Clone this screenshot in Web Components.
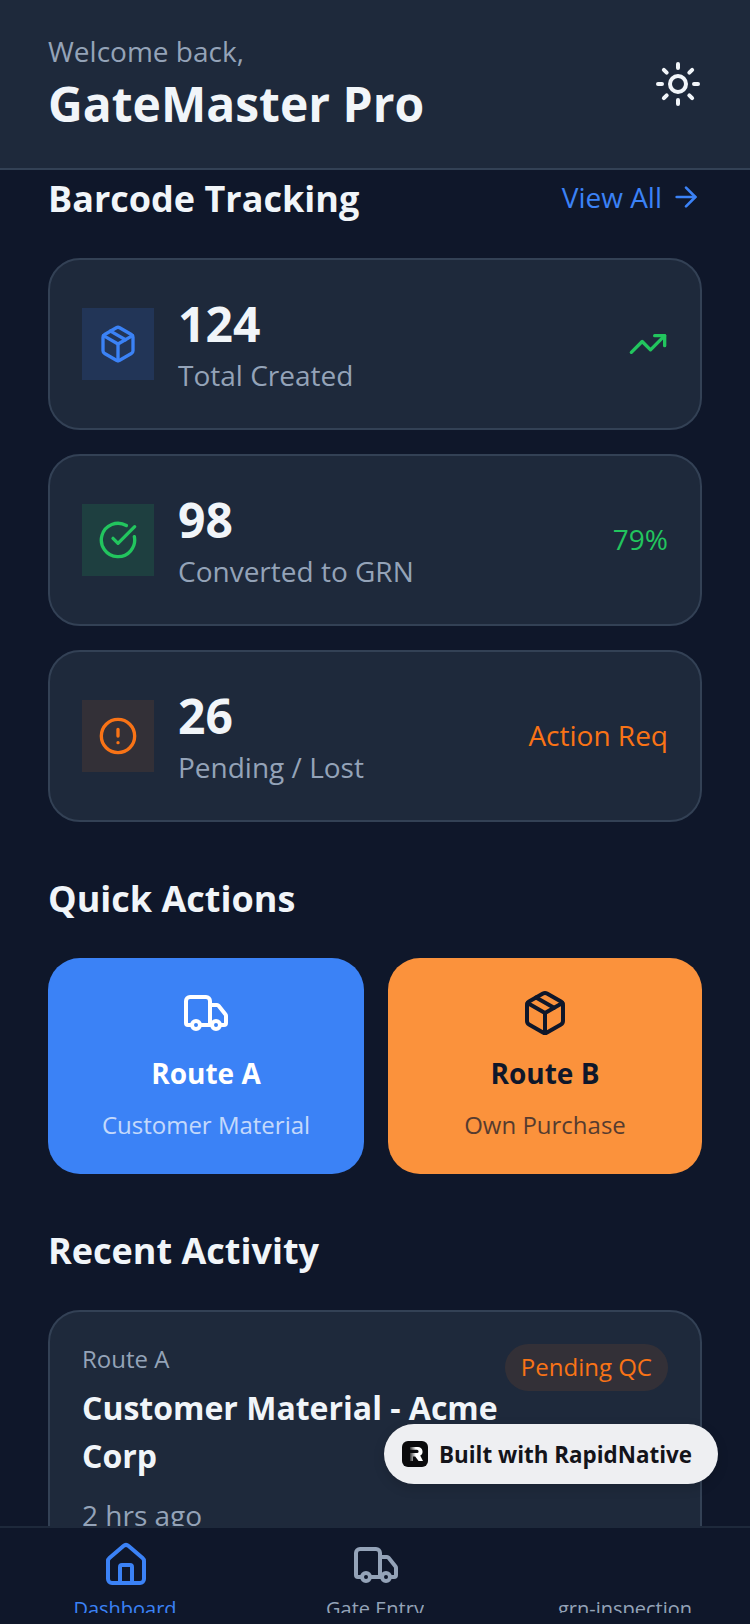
<!DOCTYPE html>
<html lang="en">
<head>
<meta charset="utf-8">
<title>GateMaster Pro</title>
<style>
  html, body { margin: 0; background: #0f172a; }
  body { font-family: "Open Sans", sans-serif; }
</style>
</head>
<body>
<gate-app>
  <gate-header greeting="Welcome back," name="GateMaster Pro"></gate-header>

  <section-heading title="Barcode Tracking" link="View All" first></section-heading>
  <stat-card icon="package" tone="blue" value="124" label="Total Created"><app-icon name="trending-up" size="40" style="color:#22c55e"></app-icon></stat-card>
  <stat-card icon="circle-check" tone="green" value="98" label="Converted to GRN"><span style="color:#22c55e;position:relative;top:-1px">79%</span></stat-card>
  <stat-card icon="circle-alert" tone="orange" value="26" label="Pending / Lost"><span style="color:#f97316;position:relative;top:-1px">Action Req</span></stat-card>

  <section-heading title="Quick Actions"></section-heading>
  <div style="display:flex;gap:24px">
    <action-card icon="truck" title="Route A" sub="Customer Material" variant="a"></action-card>
    <action-card icon="package" title="Route B" sub="Own Purchase" variant="b"></action-card>
  </div>

  <section-heading title="Recent Activity"></section-heading>
  <activity-card route="Route A" title="Customer Material - Acme Corp" time="2 hrs ago" status="Pending QC"></activity-card>

  <tab-bar slot="nav">
    <tab-item icon="house" label="Dashboard" active></tab-item>
    <tab-item icon="truck" label="Gate Entry"></tab-item>
    <tab-item label="grn-inspection"></tab-item>
  </tab-bar>
  <built-badge slot="overlay"></built-badge>
</gate-app>

<script>
  // lucide-style icon bodies, all on a 24 box
  const ICONS = {
    sun: `<circle cx="12" cy="12" r="4"/><path d="M12 2v2M12 20v2M4.93 4.93l1.41 1.41M17.66 17.66l1.41 1.41M2 12h2M20 12h2M6.34 17.66l-1.41 1.41M19.07 4.93l-1.41 1.41"/>`,
    package: `<path d="M11 21.73a2 2 0 0 0 2 0l7-4A2 2 0 0 0 21 16V8a2 2 0 0 0-1-1.73l-7-4a2 2 0 0 0-2 0l-7 4A2 2 0 0 0 3 8v8a2 2 0 0 0 1 1.73z"/><path d="M12 22V12"/><path d="M3.29 7 12 12l8.71-5"/><path d="m7.5 4.27 9 5.15"/>`,
    'circle-check': `<path d="M21.801 10A10 10 0 1 1 17 3.335"/><path d="m9 11 3 3L22 4"/>`,
    'circle-alert': `<circle cx="12" cy="12" r="10"/><path d="M12 8v4M12 16h.01"/>`,
    'trending-up': `<path d="M22 7l-8.5 8.5-5-5L2 17"/><path d="M16 7h6v6"/>`,
    'arrow-right': `<path d="M5 12h14"/><path d="m12 5 7 7-7 7"/>`,
    truck: `<path d="M14 18V6a2 2 0 0 0-2-2H4a2 2 0 0 0-2 2v11a1 1 0 0 0 1 1h2"/><path d="M15 18H9"/><path d="M19 18h2a1 1 0 0 0 1-1v-3.65a1 1 0 0 0-.22-.624l-3.48-4.35A1 1 0 0 0 17.52 8H14"/><circle cx="17" cy="18" r="2"/><circle cx="7" cy="18" r="2"/>`,
    house: `<path d="M15 21v-8a1 1 0 0 0-1-1h-4a1 1 0 0 0-1 1v8"/><path d="M3 10a2 2 0 0 1 .709-1.528l7-5.999a2 2 0 0 1 2.582 0l7 5.999A2 2 0 0 1 21 10v9a2 2 0 0 1-2 2H5a2 2 0 0 1-2-2z"/>`,
  };

  class AppIcon extends HTMLElement {
    connectedCallback() {
      const size = this.getAttribute('size') || 24;
      const root = this.shadowRoot || this.attachShadow({ mode: 'open' });
      root.innerHTML = `
        <style>:host { display: block; width: ${size}px; height: ${size}px; flex: none; } svg { display: block; }</style>
        <svg xmlns="http://www.w3.org/2000/svg" width="${size}" height="${size}" viewBox="0 0 24 24" fill="none"
          stroke="currentColor" stroke-width="2" stroke-linecap="round" stroke-linejoin="round">${ICONS[this.getAttribute('name')] || ''}</svg>`;
    }
  }

  class GateApp extends HTMLElement {
    constructor() {
      super();
      this.attachShadow({ mode: 'open' }).innerHTML = `
        <style>
          :host { display: flex; flex-direction: column; position: relative; height: 1624px; overflow: hidden; background: #0f172a; }
          main { flex: 1; min-height: 0; overflow: hidden; padding: 0 48px; display: flex; flex-direction: column; }
        </style>
        <slot name="top"></slot>
        <main><slot></slot></main>
        <slot name="nav"></slot>
        <slot name="overlay"></slot>`;
    }
    connectedCallback() {
      this.querySelector('gate-header')?.setAttribute('slot', 'top');
    }
  }

  class GateHeader extends HTMLElement {
    connectedCallback() {
      this.attachShadow({ mode: 'open' }).innerHTML = `
        <style>
          :host { display: flex; align-items: center; justify-content: space-between; flex: none; box-sizing: border-box; height: 170px;
            padding: 32px 48px 32px; background: #1e293b; border-bottom: 2px solid #334155; }
          .hello { margin-top: -1px; font-size: 28px; color: #94a3b8; }
          .name { margin-top: 1px; font-size: 48px; font-weight: 700; color: #f1f5f9; }
          app-icon { color: #f1f5f9; }
        </style>
        <div>
          <div class="hello">${this.getAttribute('greeting')}</div>
          <div class="name">${this.getAttribute('name')}</div>
        </div>
        <app-icon name="sun" size="48"></app-icon>`;
    }
  }

  class SectionHeading extends HTMLElement {
    connectedCallback() {
      const link = this.getAttribute('link');
      const first = this.hasAttribute('first');
      this.attachShadow({ mode: 'open' }).innerHTML = `
        <style>
          :host { display: flex; align-items: center; justify-content: space-between; flex: none;
            margin: ${first ? '4px 0 35px' : '52px 0 35px'}; }
          h2 { margin: 0; font-size: 36px; font-weight: 700; color: #f1f5f9; }
          .link { display: flex; align-items: center; gap: 8px; margin-top: -4px; font-size: 28px; color: #3b82f6; }
        </style>
        <h2>${this.getAttribute('title')}</h2>
        ${link ? `<div class="link">${link}<app-icon name="arrow-right" size="32"></app-icon></div>` : ''}`;
    }
  }

  const TONES = {
    blue: ['#3b82f6', 'rgba(59,130,246,.15)'],
    green: ['#22c55e', 'rgba(34,197,94,.15)'],
    orange: ['#f97316', 'rgba(249,115,22,.1)'],
  };

  class StatCard extends HTMLElement {
    connectedCallback() {
      const [fg, bg] = TONES[this.getAttribute('tone')];
      this.attachShadow({ mode: 'open' }).innerHTML = `
        <style>
          :host { display: flex; align-items: center; flex: none; box-sizing: border-box; height: 172px; gap: 24px; padding: 0 32px; margin-bottom: 24px;
            background: #1e293b; border: 2px solid #334155; border-radius: 32px; }
          :host(:last-of-type) { margin-bottom: 0; }
          .box { display: flex; align-items: center; justify-content: center; width: 72px; height: 72px; background: ${bg}; color: ${fg}; }
          .text { flex: 1; margin-top: -4px; }
          .value { font-size: 48px; font-weight: 700; color: #f1f5f9; }
          .label { font-size: 28px; color: #94a3b8; }
          .side { font-size: 28px; }
        </style>
        <div class="box"><app-icon name="${this.getAttribute('icon')}" size="40"></app-icon></div>
        <div class="text">
          <div class="value">${this.getAttribute('value')}</div>
          <div class="label">${this.getAttribute('label')}</div>
        </div>
        <div class="side"><slot></slot></div>`;
    }
  }

  class ActionCard extends HTMLElement {
    connectedCallback() {
      const isA = this.getAttribute('variant') === 'a';
      this.attachShadow({ mode: 'open' }).innerHTML = `
        <style>
          :host { flex: 1 1 ${isA ? 316 : 314}px; display: flex; flex-direction: column; align-items: center; box-sizing: border-box; height: 216px; padding: 31px 0 0;
            border-radius: 32px; background: ${isA ? '#3b82f6' : '#fb923c'}; color: ${isA ? '#fff' : '#0f172a'}; }
          .title { margin-top: 17px; font-size: 28px; font-weight: 700; }
          .sub { margin-top: 16px; font-size: 24px; opacity: .7; }
        </style>
        <app-icon name="${this.getAttribute('icon')}" size="48"></app-icon>
        <div class="title">${this.getAttribute('title')}</div>
        <div class="sub">${this.getAttribute('sub')}</div>`;
    }
  }

  class ActivityCard extends HTMLElement {
    connectedCallback() {
      this.attachShadow({ mode: 'open' }).innerHTML = `
        <style>
          :host { display: flex; align-items: flex-start; flex: none; padding: 31px 32px 32px; background: #1e293b;
            border: 2px solid #334155; border-radius: 32px; }
          .left { flex: 1; min-width: 0; }
          .route { margin-top: -1px; font-size: 24px; color: #94a3b8; }
          .title { margin-top: 9px; font-size: 32px; line-height: 48px; font-weight: 700; color: #f1f5f9; }
          .time { margin-top: 16px; font-size: 28px; color: #94a3b8; }
          .pill { flex: none; margin-top: 1px; padding: 6px 16px 8px; border-radius: 999px; font-size: 24px; color: #f97316; background: rgba(249,115,22,.1); }
        </style>
        <div class="left">
          <div class="route">${this.getAttribute('route')}</div>
          <div class="title">${this.getAttribute('title')}</div>
          <div class="time">${this.getAttribute('time')}</div>
        </div>
        <div class="pill">${this.getAttribute('status')}</div>`;
    }
  }

  class TabBar extends HTMLElement {
    constructor() {
      super();
      this.attachShadow({ mode: 'open' }).innerHTML = `
        <style>
          :host { display: flex; flex: none; box-sizing: border-box; height: 98px; background: #0f172a; border-top: 2px solid #1e293b; }
        </style>
        <slot></slot>`;
    }
  }

  class TabItem extends HTMLElement {
    connectedCallback() {
      const icon = this.getAttribute('icon');
      const active = this.hasAttribute('active');
      this.attachShadow({ mode: 'open' }).innerHTML = `
        <style>
          :host { flex: 1; display: flex; flex-direction: column; align-items: center; padding-top: 13px; color: ${active ? '#3b82f6' : '#94a3b8'}; }
          .ico { height: 48px; margin-left: 2px; }
          .label { height: 18px; margin-top: 6px; overflow: hidden; font-size: 20px; line-height: 28px; white-space: nowrap; }
        </style>
        <div class="ico">${icon ? `<app-icon name="${icon}" size="48"></app-icon>` : ''}</div>
        <div class="label">${this.getAttribute('label')}</div>`;
    }
  }

  class BuiltBadge extends HTMLElement {
    constructor() {
      super();
      this.attachShadow({ mode: 'open' }).innerHTML = `
        <style>
          :host { position: absolute; left: 384px; top: 1424px; width: 334px; height: 60px; box-sizing: border-box; display: flex; align-items: center; gap: 11px;
            padding-left: 18px; border-radius: 30px; background: #eeeff2; color: #14141a; font-size: 22.4px; font-weight: 700;
            box-shadow: 0 4px 12px rgba(0,0,0,.15); white-space: nowrap; }
          svg { display: block; flex: none; }
        </style>
        <svg width="26" height="26" viewBox="0 0 26 26" aria-hidden="true">
          <defs><linearGradient id="rn" x1="0" x2="1" y1="0" y2="0"><stop offset="0" stop-color="#333"/><stop offset=".45" stop-color="#fff"/></linearGradient></defs>
          <rect width="26" height="26" rx="6" fill="#0b0b0d"/>
          <path d="M8 6h8a4.6 4.6 0 0 1 2.2 8.6L21 20h-4.4l-3.4-4.6H11V20H8V12h7a1.6 1.6 0 0 0 0-3.2H8z" fill="url(#rn)"/>
        </svg>
        <span>Built with RapidNative</span>`;
    }
  }

  customElements.define('app-icon', AppIcon);
  customElements.define('gate-app', GateApp);
  customElements.define('gate-header', GateHeader);
  customElements.define('section-heading', SectionHeading);
  customElements.define('stat-card', StatCard);
  customElements.define('action-card', ActionCard);
  customElements.define('activity-card', ActivityCard);
  customElements.define('tab-bar', TabBar);
  customElements.define('tab-item', TabItem);
  customElements.define('built-badge', BuiltBadge);
</script>
</body>
</html>
